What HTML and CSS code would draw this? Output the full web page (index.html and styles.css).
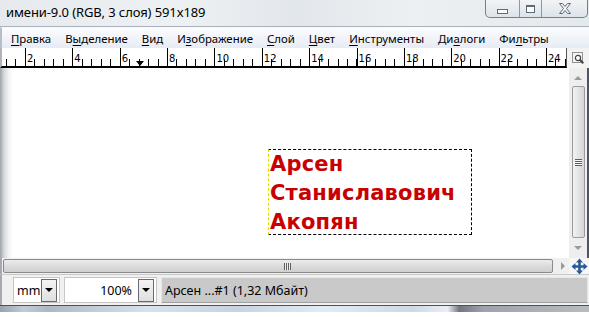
FILE: index.html
```html
<!DOCTYPE html>
<html>
<head>
<meta charset="utf-8">
<link rel="stylesheet" href="styles.css">
</head>
<body>
<div class="win">
  <header class="titlebar">
    <span class="title">имени-9.0 (RGB, 3 слоя) 591x189</span>
    <div class="wbtns">
      <span class="wb wb-min"><i></i></span>
      <span class="wb wb-max"><i></i></span>
      <span class="wb wb-close">
        <svg width="14" height="11" viewBox="0 0 14 11"><path d="M1.5 0.5h3l2.5 3 2.5-3h3l-4 5 4 5h-3l-2.5-3-2.5 3h-3l4-5z" fill="#f4f6f8" stroke="#5d6a78" stroke-width="1"/></svg>
      </span>
    </div>
  </header>
  <nav class="menubar">
    <span class="mi"><u>П</u>равка</span>
    <span class="mi">В<u>ы</u>деление</span>
    <span class="mi"><u>В</u>ид</span>
    <span class="mi">И<u>з</u>ображение</span>
    <span class="mi"><u>С</u>лой</span>
    <span class="mi"><u>Ц</u>вет</span>
    <span class="mi"><u>И</u>нструменты</span>
    <span class="mi">Ди<u>а</u>логи</span>
    <span class="mi">Фи<u>л</u>ьтры</span>
  </nav>
  <div class="rulerrow">
    <div class="ruler">
      <span>2</span><span>4</span><span>6</span><span>8</span><span>10</span><span>12</span><span>14</span><span>16</span><span>18</span><span>20</span><span>22</span><span>24</span>
      <i class="pointer"></i>
    </div>
    <div class="navbtn">
      <svg width="14" height="14" viewBox="0 0 14 14"><rect x="1.5" y="1.5" width="10" height="10" fill="none" stroke="#333" stroke-dasharray="1 1"/><circle cx="7" cy="7" r="2.6" fill="#fff" stroke="#444" stroke-width="1.2"/><path d="M8.8 8.8l3.5 3.5" stroke="#444" stroke-width="2"/></svg>
    </div>
  </div>
  <div class="main">
    <div class="canvas">
      <div class="layer">
        <p>Арсен</p>
        <p>Станиславович</p>
        <p>Акопян</p>
      </div>
    </div>
    <div class="vscroll">
      <span class="arr arr-up"></span>
      <div class="vthumb"><span class="grip-h"></span></div>
      <span class="arr arr-down"></span>
    </div>
  </div>
  <div class="hrow">
    <div class="hscroll">
      <div class="hthumb"><span class="grip-v"></span></div>
      <span class="arr arr-right"></span>
    </div>
    <div class="navcross">
      <svg width="17" height="17" viewBox="0 0 17 17"><path d="M8.5 0.5l3.5 4h-2.2v2.7h2.7v-2.2l4 3.5-4 3.5v-2.2h-2.7v2.7h2.2l-3.5 4-3.5-4h2.2v-2.7h-2.7v2.2l-4-3.5 4-3.5v2.2h2.7v-2.7h-2.2z" fill="#2b5a96"/></svg>
    </div>
  </div>
  <div class="status">
    <div class="combo combo-unit">
      <span class="cval">mm</span>
      <span class="cbtn"></span>
    </div>
    <div class="combo combo-zoom">
      <span class="cval">100%</span>
      <span class="cbtn"></span>
    </div>
    <div class="slabel">Арсен ...#1 (1,32 Мбайт)</div>
  </div>
  <div class="taskbar"><div class="tb-glass"></div></div>
</div>
</body>
</html>
```

FILE: styles.css
```css
html, body {
  margin: 0;
  padding: 0;
}
body {
  width: 589px;
  height: 317px;
  overflow: hidden;
  background: #fff;
  font-family: "Noto Sans", "Open Sans", sans-serif;
  color: #000;
}
.win {
  display: flex;
  flex-direction: column;
  width: 589px;
  height: 317px;
}

/* title bar */
.titlebar {
  height: 26px;
  flex: none;
  display: flex;
  justify-content: space-between;
  align-items: flex-start;
  background: linear-gradient(90deg, #e6eaee 0%, #eef1f3 30%, #e2e7ec 50%, #edf0f2 70%, #e4e9ed 100%);
  border-bottom: 1px solid #a9b2bc;
}
.title {
  font-size: 13px;
  line-height: 14px;
  padding: 5px 0 0 6px;
  letter-spacing: -0.1px;
}
.wbtns {
  display: flex;
  height: 17px;
  margin-right: 1px;
  border: 1px solid #73808d;
  border-top: none;
  border-radius: 0 0 5px 5px;
  overflow: hidden;
  background: linear-gradient(#f2f4f6, #dde3e9);
}
.wb {
  display: flex;
  align-items: center;
  justify-content: center;
  height: 17px;
}
.wb + .wb {
  border-left: 1px solid #8d98a3;
}
.wb-min { width: 33px; }
.wb-max { width: 21px; }
.wb-close { width: 45px; }
.wb-min i {
  display: block;
  width: 9px;
  height: 3px;
  margin-top: 5px;
  border: 1px solid #5d6a78;
  background: #fafbfc;
}
.wb-max i {
  display: block;
  width: 7px;
  height: 5px;
  border: 1px solid #5d6a78;
  border-top-width: 2px;
  background: #fafbfc;
}

/* menu */
.menubar {
  height: 20px;
  flex: none;
  display: flex;
  align-items: center;
  gap: 14px;
  padding-left: 9px;
  border-left: 2px solid #b9bec6;
  background: linear-gradient(#fbfcfe, #e7ebf4);
  font-size: 11.4px;
  border-top: 1px solid #f8f9fb;
}
.mi {
  line-height: 16px;
  padding-top: 2px;
}
.mi u {
  text-decoration-thickness: 1px;
  text-underline-offset: 2px;
}

/* ruler */
.rulerrow {
  height: 20px;
  flex: none;
  display: flex;
}
.ruler {
  position: relative;
  width: 567px;
  box-sizing: border-box;
  border-right: 1px solid #555;
  border-left: 2px solid #b0b4ba;
  display: flex;
  padding-left: 25px;
  border-bottom: 2px solid #000;
  background:
    repeating-linear-gradient(90deg, #000 0 1px, transparent 1px 47.36px) 22.5px 0 / 100% 100% no-repeat,
    repeating-linear-gradient(90deg, #000 0 1px, transparent 1px 9.472px) 3.5px 100% / 100% 7px no-repeat,
    #fff;
}
.ruler span {
  flex: none;
  width: 47.36px;
  font-family: "DejaVu Sans", sans-serif;
  font-size: 10px;
  line-height: 10px;
  padding-top: 6px;
  color: #000;
}
.pointer {
  position: absolute;
  left: 134px;
  bottom: 0;
  width: 0;
  height: 0;
  border-left: 4px solid transparent;
  border-right: 4px solid transparent;
  border-top: 5px solid #000;
}
.navbtn {
  flex: 1;
  display: flex;
  justify-content: center;
  padding-top: 3px;
  background: #f3f3f3;
}

/* canvas */
.main {
  height: 190px;
  flex: none;
  display: flex;
}
.canvas {
  flex: 1;
  box-sizing: border-box;
  padding: 81px 0 0 268px;
  background: linear-gradient(90deg, #9ea2a8 0, #d5d7da 4px, #f4f5f6 9px, #fff 13px);
}
.layer {
  width: 204px;
  height: 86px;
  box-sizing: border-box;
  border: 1px dashed #000;
  border-left-color: #e8d800;
  padding-left: 1px;
}
.layer p {
  margin: 0;
  font-family: "DejaVu Sans", sans-serif;
  font-weight: bold;
  font-size: 21px;
  line-height: 29px;
  color: #c80000;
  white-space: nowrap;
  letter-spacing: 0.2px;
}
.vscroll {
  width: 20px;
  flex: none;
  box-sizing: border-box;
  border-right: 2px solid #4d5560;
  background: #eeeeee;
  display: flex;
  flex-direction: column;
  align-items: center;
}
.arr {
  display: block;
  width: 0;
  height: 0;
}
.arr-up {
  margin-top: 8px;
  border-left: 4px solid transparent;
  border-right: 4px solid transparent;
  border-bottom: 4px solid #9a9a9a;
}
.arr-down {
  margin-top: 8px;
  border-left: 4px solid transparent;
  border-right: 4px solid transparent;
  border-top: 4px solid #9a9a9a;
}
.vthumb {
  margin-top: 6px;
  width: 13px;
  height: 152px;
  box-sizing: border-box;
  border: 1px solid #9b9b9b;
  border-radius: 2px;
  background: linear-gradient(90deg, #f2f2f2, #e4e4e4 50%, #d6d6d6);
  display: flex;
  align-items: center;
  justify-content: center;
}
.grip-h {
  width: 7px;
  height: 7px;
  background: repeating-linear-gradient(#5e5e5e 0 1px, #f8f8f8 1px 2px);
}

/* h scroll row */
.hrow {
  height: 16px;
  flex: none;
  display: flex;
  background: #f0f0f0;
  border-left: 2px solid #a6aab0;
}
.hscroll {
  flex: 1;
  display: flex;
  align-items: center;
  padding-left: 1px;
}
.hthumb {
  width: 550px;
  height: 14px;
  box-sizing: border-box;
  border: 1px solid #8a8a8a;
  border-radius: 2px;
  background: linear-gradient(#ececec, #dcdcdc 50%, #cfcfcf);
  display: flex;
  align-items: center;
  justify-content: center;
}
.grip-v {
  width: 7px;
  height: 7px;
  margin-left: 18px;
  background: repeating-linear-gradient(90deg, #5e5e5e 0 1px, #f0f0f0 1px 2px);
}
.arr-right {
  margin-left: 8px;
  border-top: 4px solid transparent;
  border-bottom: 4px solid transparent;
  border-left: 4px solid #9a9a9a;
}
.navcross {
  width: 20px;
  flex: none;
  display: flex;
  justify-content: center;
  align-items: center;
  background: #f7f7f7;
}

/* status */
.status {
  height: 31px;
  flex: none;
  box-sizing: border-box;
  display: flex;
  align-items: center;
  gap: 4px;
  padding: 0 1px 0 11px;
  background: #f0f0f0;
  border-left: 2px solid #a6aab0;
  border-top: 1px solid #c9c9c9;
  font-size: 12.5px;
}
.combo {
  height: 26px;
  box-sizing: border-box;
  display: flex;
  align-items: center;
  background: #fff;
  border: 1px solid #c6c6c6;
}
.combo-unit {
  width: 47px;
  padding-left: 3px;
}
.combo-zoom {
  width: 93px;
  padding-left: 3px;
  justify-content: flex-end;
}
.combo-unit .cval { flex: 1; }
.combo-zoom .cval { margin-right: 6px; }
.cbtn {
  width: 16px;
  height: 23px;
  box-sizing: border-box;
  border: 1px solid #6a6a6a;
  background: linear-gradient(#f4f4f4, #e0e0e0);
  display: flex;
  align-items: center;
  justify-content: center;
  margin-right: 2px;
}
.cbtn::after {
  content: "";
  border-left: 4px solid transparent;
  border-right: 4px solid transparent;
  border-top: 4px solid #000;
}
.slabel {
  flex: 1;
  height: 26px;
  box-sizing: border-box;
  display: flex;
  align-items: center;
  padding-left: 3px;
  background: #c9c9c9;
  border: 1px solid #e6e6e6;
  border-bottom-color: #a0a0a0;
}

.taskbar {
  height: 12px;
  flex: none;
  border-top: 1px solid #4a525b;
  background: #fff;
}
.tb-glass {
  height: 6px;
  background: linear-gradient(90deg, #9aa3ad 0%, #c3ccd6 4%, #aeb8c3 8%, #d9e2ec 25%, #c8d3df 40%, #e3ebf4 55%, #cfd9e4 70%, #e9eff5 76%, #70777f 78%, #9ca3aa 82%, #b6bcc2 100%);
}
```
